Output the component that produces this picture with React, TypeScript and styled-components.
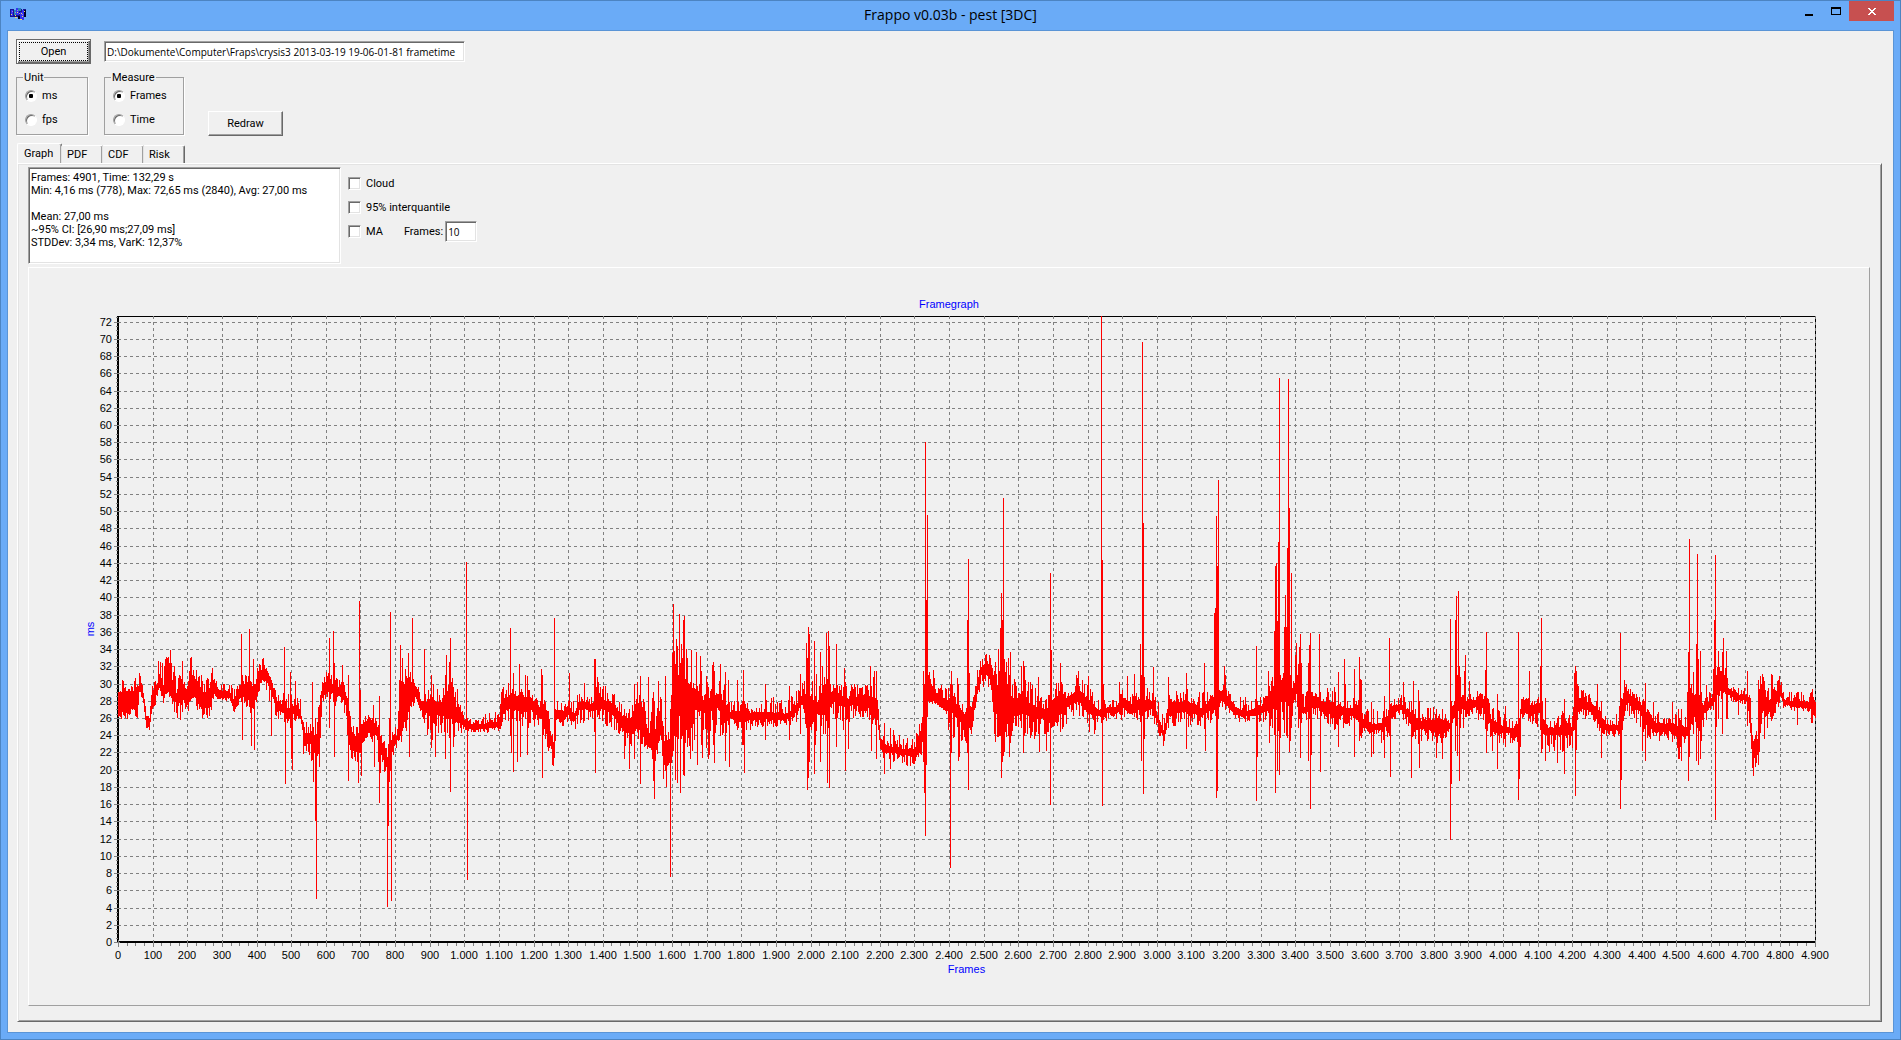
import React, { useLayoutEffect, useMemo, useRef, useState } from "react";
import styled, { createGlobalStyle } from "styled-components";

const face = "#f0f0f0";
const shade = "#a0a0a0";
const dark = "#696969";
const light = "#e3e3e3";

const GlobalStyle = createGlobalStyle`
  * { box-sizing: border-box; }
  body { margin: 0; background: #6aabf7; }
  button, input, textarea { font: inherit; color: inherit; }
`;

const Window = styled.div`
  min-height: 100vh;
  display: flex;
  flex-direction: column;
  padding: 0 6px 6px;
  border: 1px solid #4c84c2;
  background: #6aabf7;
  color: #000;
  font: 11px/13px Roboto, "Liberation Sans", sans-serif;
`;

const TitleBar = styled.header`
  display: grid;
  grid-template-columns: 1fr auto 1fr;
  height: 29px;
  flex: none;
`;

const AppIcon = styled.svg`
  margin: 7px 0 0 3px;
`;

const Title = styled.h1`
  margin: 0;
  font: 400 14px/28px "Open Sans", "Segoe UI", sans-serif;
`;

const WindowButtons = styled.div`
  display: flex;
  justify-content: flex-end;
`;

const WindowButton = styled.button<{ $close?: boolean }>`
  width: ${(p) => (p.$close ? 45 : 27)}px;
  height: 20px;
  padding: 0;
  border: 0;
  display: grid;
  place-items: center;
  background: ${(p) => (p.$close ? "#c75050" : "transparent")};
`;

const Client = styled.main`
  flex: 1;
  display: flex;
  flex-direction: column;
  padding: 8px 11px 10px 8px;
  border: 1px solid #5a94d6;
  background: ${face};
`;

const FileRow = styled.div`
  display: flex;
  align-items: center;
  gap: 13px;
  height: 25px;
`;

const PushButton = styled.button<{ $default?: boolean }>`
  width: 75px;
  height: 25px;
  padding: ${(p) => (p.$default ? 2 : 3)}px;
  border: 1px solid;
  border-color: ${(p) => (p.$default ? dark : `#fff ${dark} ${dark} #fff`)};
  background: ${face};
  box-shadow: ${(p) =>
    p.$default
      ? `inset 1px 1px 0 #fff, inset -1px -1px 0 ${dark}, inset -2px -2px 0 ${shade}`
      : `inset -1px -1px 0 ${shade}`};
`;

const FocusMark = styled.span`
  display: block;
  line-height: 17px;
  border: 1px dotted #000;
`;

const Field = styled.input<{ $width: number }>`
  width: ${(p) => p.$width}px;
  height: 21px;
  padding: 0 2px;
  border: 1px solid;
  border-color: ${shade} #fff #fff ${shade};
  border-radius: 0;
  background: #fff;
  box-shadow: inset 1px 1px 0 ${dark}, inset -1px -1px 0 ${light};
  font: 10px/13px "Open Sans", "Liberation Sans", sans-serif;
  outline: 0;
`;

const OptionsRow = styled.div`
  display: flex;
  align-items: flex-end;
  margin-top: 8px;
`;

const Group = styled.fieldset<{ $width: number; $gap: number }>`
  width: ${(p) => p.$width}px;
  height: 63px;
  min-width: 0;
  margin: 0 ${(p) => p.$gap}px 1px 0;
  padding: 6px 8px 0;
  border: 1px solid ${shade};
  box-shadow: 1px 1px 0 #fff;
`;

const Legend = styled.legend`
  margin-left: -2px;
  padding: 0 1px;
  line-height: 11px;
  background: ${face};
`;

const Option = styled.label`
  display: flex;
  align-items: center;
  gap: 5px;
  height: 13px;
  margin-bottom: 11px;
`;

const Radio = styled.input`
  appearance: none;
  width: 12px;
  height: 12px;
  margin: 0;
  border: 1px solid;
  border-color: ${shade} #fff #fff ${shade};
  border-radius: 50%;
  background: ${(p) =>
    p.checked ? "radial-gradient(circle, #000 0 2px, #fff 2.5px)" : "#fff"};
  box-shadow: inset 1px 1px 0 ${dark};
`;

const Check = styled.input`
  appearance: none;
  width: 13px;
  height: 13px;
  margin: 0;
  border: 1px solid;
  border-color: ${shade} #fff #fff ${shade};
  background: #fff;
  box-shadow: inset 1px 1px 0 ${dark}, inset -1px -1px 0 ${light};
  &:checked { background: radial-gradient(circle, #000 0 3px, #fff 3px); }
`;

const Tabs = styled.div`
  display: flex;
  align-items: flex-end;
  height: 20px;
  margin: 7px 0 0 1px;
`;

const Tab = styled.button<{ $active: boolean }>`
  width: ${(p) => (p.$active ? 45 : 42)}px;
  height: ${(p) => (p.$active ? 20 : 18)}px;
  margin-left: ${(p) => (p.$active ? 0 : -1)}px;
  padding: 0 0 0 ${(p) => (p.$active ? 6 : 5)}px;
  border: 1px solid;
  border-color: #fff ${dark} transparent ${(p) => (p.$active ? "#fff" : light)};
  border-bottom: 0;
  border-radius: 2px 2px 0 0;
  background: ${face};
  box-shadow: inset -1px 0 0 ${shade};
  text-align: left;
`;

const Page = styled.section`
  flex: 1;
  display: flex;
  flex-direction: column;
  margin-left: 1px;
  padding: 3px 11px 15px 10px;
  border: 1px solid;
  border-color: #fff ${dark} ${dark} #fff;
  box-shadow: inset 1px 1px 0 ${light}, inset -1px -1px 0 ${shade};
`;

const Summary = styled.div`
  display: flex;
  gap: 7px;
`;

const Report = styled.textarea`
  display: block;
  width: 313px;
  height: 97px;
  padding: 3px 2px;
  border: 1px solid;
  border-color: ${shade} #fff #fff ${shade};
  background: #fff;
  box-shadow: inset 1px 1px 0 ${dark}, inset -1px -1px 0 ${light};
  resize: none;
  outline: 0;
  overflow: hidden;
`;

const Overlays = styled.div`
  display: flex;
  flex-direction: column;
  padding-top: 10px;
`;

const AverageRow = styled.div`
  display: flex;
  align-items: flex-start;
`;

const FramesLabel = styled.label`
  display: flex;
  align-items: center;
  gap: 2px;
  margin: -4px 0 0 21px;
`;

const ChartPanel = styled.div`
  flex: 1;
  min-height: 300px;
  display: grid;
  margin-top: 3px;
  border: 1px solid;
  border-color: #fff ${shade} ${shade} #fff;
`;

const ChartSvg = styled.svg`
  display: block;
  width: 100%;
  height: 100%;
  min-width: 0;
  shape-rendering: crispEdges;
  font: 11px "Liberation Sans", Arial, sans-serif;
`;

const REPORT = `Frames: 4901, Time: 132,29 s
Min: 4,16 ms (778), Max: 72,65 ms (2840), Avg: 27,00 ms

Mean: 27,00 ms
~95% CI: [26,90 ms;27,09 ms]
STDDev: 3,34 ms, VarK: 12,37%`;

/* Frame, usual low, usual high, and the low and high of the scatter (ms). */
const BANDS: number[] = [
  0,26.2,29.4,26,30.8, 40,27,29.4,25.8,31, 55,26.5,29.5,26,31, 62,29.5,31,29.4,32.5, 72,28,29,27.5,29.5,
  80,25.2,26.5,24.5,27, 90,25,26,23.4,26.5, 98,27,29,26,30, 112,29,30,28.5,32, 120,29.5,31.5,29.4,34,
  130,28.5,30,27.5,33, 140,29,33,29,33.5, 150,29,31,28,34, 160,28,30,27,34, 170,27.5,28.5,25,30,
  180,27.5,31,25,33, 188,28,30,27.5,34, 195,27,29,26.5,30, 210,28,32,27,34.2, 220,28.5,30,27,32,
  240,27,29.5,25.8,31, 255,27,29,26,31, 265,27,30,26,32, 275,29,30.5,28.5,33, 290,28.3,29.3,28.3,30,
  320,28.4,29.2,28,30, 335,26.8,28,26.5,29.5, 345,28,29.5,27.5,30, 360,28.5,30,28,31, 375,28,30.5,27,31.5,
  390,27,29,26,30, 402,29,31.5,28.5,32.5, 415,30.5,31.5,30,33.2, 432,30,31.5,29,32.5, 445,28.5,30,26,30,
  460,27,28,26,29, 490,26.2,27.2,25.5,29, 510,26.5,27.5,25,29, 525,26,27,26,28.5, 540,23,24.5,22,27,
  560,23,24,21,25, 570,21,24,19,26, 580,22,26,20,28, 590,29,30,28,31, 605,29,30.5,28,31.5,
  640,28.5,29.5,27,30.5, 655,28,29,26,30, 662,24.5,28,23.5,28.5, 675,22,24.5,21,25.5, 690,22,24,21,25,
  705,23,25.5,21,26, 720,24.3,26,24,26.5, 745,24,25.5,22,26, 755,22,24.5,19,25, 765,21,23,20,24,
  778,20,21,18,22, 790,22,24,21,25, 805,23.5,24,22.5,25, 812,24,29,22,31, 830,26,31,24,32,
  850,28,30.5,27,31, 862,28.5,29.5,28,30, 875,27,28,26.5,29, 890,26.5,28,24,29, 910,26.2,28,23,30,
  940,26.3,28,24,29.5, 955,26,30,23,32, 970,25.5,28,23,30, 985,25.3,27,24,29, 1000,25,25.8,24.5,26,
  1025,24.6,25.2,24.4,26, 1050,24.8,25.4,24.4,26.5, 1100,25,25.6,24.4,26.8, 1105,25.5,28,25,29,
  1115,27,28.5,26,31, 1140,27,28.8,24,30, 1165,26.5,28.8,23.5,29.5, 1190,27,28.5,25,29.8,
  1215,26,27.5,25,28.5, 1235,25.5,27,23,28.5, 1250,22.5,24,21,26, 1256,20.5,23,20.3,24, 1265,26,27,25,28,
  1285,25.7,27,25,29, 1300,26.3,27.5,25.5,29.8, 1315,25.5,26.5,24,28, 1330,27,28,25.5,29, 1350,27,28,25.5,29,
  1370,26.8,27.5,26,28.3, 1380,26.7,30,26,31, 1400,27,28.2,25,30, 1430,26.2,27.8,24,29,
  1460,24.5,26,22.5,27.5, 1480,24,26,21.5,27, 1495,24.5,28,23,29, 1510,24,28,23,30, 1530,22.8,24.5,22,29,
  1550,21.8,24,20,28, 1565,24,28,23,29.5, 1577,21.5,23.5,19,27, 1592,21,24,19.5,26, 1600,22,29,21,31,
  1608,26,31,24,33, 1640,26,31,23,32, 1655,27,29.5,22,31, 1690,26.5,28,24,30, 1730,27,29,24,31,
  1750,26.2,28,24,30, 1770,26,26.7,25,28, 1800,25.5,27,23.5,28.5, 1830,25.8,26.7,25,28,
  1870,25.8,26.8,25,28.5, 1930,25.8,26.6,25,28.5, 1955,26.5,27.5,25.5,29, 1980,27.8,29,27,30.5,
  1995,24,29,21,31, 2015,26.3,28,23,30, 2040,26.5,29,24,31, 2070,28,29.5,26,31, 2080,27.5,29,26,30,
  2095,27.3,28.3,24.5,30.5, 2120,27.5,28.5,26,30, 2160,27.5,28.7,26,30, 2185,26.5,28.5,25,31,
  2192,26,28,25,29, 2200,22.5,24,22,25, 2210,22,23,21,24.5, 2235,22,22.7,21,24.3, 2270,21.7,22.5,20.5,23.8,
  2300,21.5,22.5,20.3,23.8, 2315,22.5,24.5,21.5,25.5, 2325,23,27,20.5,29, 2340,28,31,28,31.5,
  2360,27.7,29,27,30.5, 2385,27,28.3,26,30, 2410,26.5,28.3,23,30, 2430,25.5,27.5,23,28.5,
  2445,24.5,26.5,23,28, 2463,25,26.5,23.8,27.5, 2475,27.5,29.5,27,31, 2490,31,32,29,33,
  2505,31,32.3,29,34, 2520,30.5,32.5,29,33, 2530,27,30,24,31, 2560,26,31,22.5,32, 2580,26,28,24,30.5,
  2610,26.5,29,24,31, 2640,26,27.5,23.5,30, 2680,25.8,27.2,24,28.5, 2700,26,28.5,25,30,
  2720,26.5,29,24,30.5, 2745,27.5,28.3,26,29, 2770,28,29.5,26.5,31, 2800,26.5,28.3,24,30,
  2830,26.2,27,24.5,29.5, 2860,26.7,27.3,26,28.5, 2880,26.5,27.3,26,28, 2900,27.2,28.5,25.5,30,
  2925,26.5,27.8,25.5,29, 2955,27,28.5,25.5,30, 2985,27,28,26,29.5, 3000,25.5,26.5,24.5,29,
  3020,23.5,24.5,22.5,26, 3035,26.5,28,25,29, 3060,26.5,28,25,29.5, 3090,26.8,28,25,29.5,
  3130,26.2,27.2,25,29, 3160,27,28.5,25.5,29.5, 3190,28,29.5,26.5,30.5, 3220,26.5,27.5,25.5,28.5,
  3250,26.2,26.8,25.5,28.5, 3290,26.3,27.3,24.5,28.3, 3320,27,28,26,29.5, 3330,27,29,24,30.5,
  3345,26.8,31,24,32, 3358,28,30.3,27.5,30.5, 3370,28,31,24,32, 3385,27,29.5,24,30, 3405,29,30,26,31,
  3415,26,30,24,31, 3425,26.7,27.3,26.5,28, 3435,27,29,25,30, 3460,27.5,28.5,25,29.5, 3480,26.5,28,25,30,
  3500,26.5,28,25,30, 3520,26.3,27.5,24,29.5, 3560,26.3,27.2,25,28.5, 3585,25.5,28,23.5,30,
  3595,24.8,26,24.5,27, 3620,24.6,25.4,24,27.5, 3650,24.6,25.4,23,27, 3665,25,26.5,23,27.5,
  3680,26.5,27.5,25.5,29, 3705,27,27.7,25.5,29, 3725,26,27,24,28.5, 3740,24.5,26.5,23,28,
  3760,24.8,25.7,23,27, 3785,24.5,26,23,27.5, 3820,24,26,23,27, 3845,24.8,25.5,24.5,26.5, 3855,26,27,25.8,28,
  3872,27,29,24,31, 3890,27,28,25,30, 3905,27.3,28.3,26.5,29, 3940,27.2,28.2,25.5,29.2,
  3955,26,28.5,23.5,29.5, 3965,24.5,26,22.5,27.5, 3990,24.3,25.2,23,27, 4035,24.3,24.8,23,26,
  4045,22.5,24.5,22,25, 4052,26.5,28.5,26,29, 4080,26.5,27.5,25,29, 4105,26.5,28,25,28.7,
  4115,24,26,22.5,27.5, 4130,24,25,22,26, 4160,24,25,22,27.3, 4200,24,25,22.5,26.5, 4210,26,29,25,31,
  4220,27,28.5,26.5,29.5, 4235,27,28,26,29.5, 4265,26.5,27.5,25.5,28.2, 4280,24.7,26.5,24,28,
  4288,24.6,25.3,23.9,26.5, 4330,24.6,25.3,23.9,26.5, 4342,24.6,28,24,29, 4355,28,29.5,27,30,
  4370,27.3,28.5,25.5,29.5, 4390,27,28,25.5,28.7, 4402,26,27.5,24.5,28.5, 4418,25,26.5,23.5,27,
  4440,24.3,25.5,23.2,26.7, 4480,24.5,25.5,23.5,26.5, 4505,23.7,25.3,22,27, 4530,24,25,23.5,26,
  4540,26,28.5,24,31, 4560,26,29,24,30, 4580,26.5,27.5,25,29, 4605,27.5,28.5,27,29, 4615,29,31,28,32,
  4640,29,30.5,28,32, 4650,28.7,29.5,28,30, 4680,28.2,28.8,27.8,29.5, 4705,28,28.8,27.7,29.5,
  4713,25,28,24.5,29, 4720,21,23,20,25, 4730,21.5,23,20.5,24.5, 4735,22,24,21,26, 4740,23,29,22,30,
  4748,27.5,30.5,26.5,31, 4765,26.5,27.7,25.5,29.5, 4780,27,29,26,30.5, 4800,28.5,30,28,30.8,
  4810,27.6,28.2,27,29, 4840,27.3,28,26.7,29.2, 4870,27.2,28,27,29, 4901,27,28,26,29.5,
];

/* Frame, lowest and highest value of the single outliers (ms). */
const SPIKES: number[] = [
  356,28,35.8, 359,23.6,31, 379,28,36.3, 383,22.9,30, 394,22.4,30, 391,28,32.9, 443,24,30, 480,26,34.2,
  483,18.4,28, 498,25,31.3, 500,21.4,27, 503,20.1,27, 512,26,30.3, 535,21.9,25, 561,23,30.2, 564,18.7,25,
  570,14.2,26, 573,5.15,23, 610,25,35.3, 622,28,36.1, 625,21.6,32.4, 648,28,32.1, 665,18.8,31,
  694,18.6,24, 697,22,39.6, 700,22,29.2, 703,19.4,25, 737,24,27.5, 740,20.4,25, 754,16.2,28.6,
  778,4.16,21, 781,13.6,23, 783,18.7,26, 786,22,38.3, 789,4.9,23, 815,24,34.5, 821,25,33, 838,28,33.5,
  841,21.6,29, 850,28,37.6, 884,26,34, 905,22.6,31, 916,21.6,28, 945,21.4,31, 948,26,33.3, 957,26,32.5,
  960,17.5,35.3, 968,22.8,28, 1006,25,44.1, 1009,7.3,26, 1133,24,36.4, 1136,22,28, 1141,19.9,31.2,
  1153,21,28, 1159,27,32.3, 1162,21.6,28, 1176,26,31, 1182,21.8,30.9, 1222,26,31.7, 1225,19.2,31,
  1260,21.5,37.6, 1263,23.5,27, 1303,26,31.2, 1346,27,30.1, 1375,24.5,32.9, 1378,19.7,32.8, 1462,21.4,27,
  1476,20.2,26, 1491,21.3,30, 1499,26,30.2, 1508,18.5,30.9, 1531,23,30.7, 1549,16.7,28, 1546,18.8,29,
  1560,24,30.3, 1575,19,24, 1580,20,30.9, 1583,18.1,24, 1595,7.7,27, 1601,26,33.5, 1603,26,39.2,
  1606,24,33.8, 1609,18.9,31, 1612,26,35.2, 1615,18.6,34.4, 1621,27,38.1, 1624,17.4,30, 1627,29,34.6,
  1630,24,33, 1632,19.5,37.4, 1635,19.4,37.8, 1641,29,34, 1644,22.8,33, 1653,21.4,30, 1655,27,33.9,
  1670,27,33.6, 1673,20.6,27, 1681,27,33.2, 1684,23,31.4, 1687,21.5,28, 1699,22.6,30.9, 1703,21.4,28,
  1708,21.8,27, 1716,26,32.1, 1719,23,32.5, 1722,20.9,31.5, 1739,24,32.3, 1754,21.1,31.3, 1762,26,30.4,
  1765,20.4,27, 1788,25,30.4, 1803,23,28, 1806,23,31.6, 1808,19.7,28, 1869,23.6,29.9, 1939,23.6,29.7,
  1970,24.3,31.1, 1987,25,34.7, 1990,17.7,33, 1993,19.2,36.5, 1996,21,35.8, 2010,19.6,34.9, 2013,23,28,
  2016,26,31.1, 2028,21,33.6, 2032,27,32, 2045,27,35.9, 2048,18.6,28, 2051,28,36.1, 2054,18,34.4,
  2074,22.8,34.6, 2097,28,31.8, 2100,20,28, 2109,22.5,28, 2172,28,32, 2175,22.3,28, 2184,28,31.4,
  2190,21.4,31.5, 2213,19.6,25.4, 2230,20.2,24.8, 2238,22,24.6, 2325,21,31.5, 2328,17.4,30,
  2331,12.4,58, 2334,20.6,39.7, 2337,27,49.6, 2354,29,31.6, 2403,8.7,30, 2406,22.1,31.4, 2423,26,30.6,
  2426,21.1,30, 2429,21.6,27, 2452,22,37.4, 2455,17.8,44.5, 2458,25,31.2, 2529,24.2,31.5, 2534,23.3,32.5,
  2541,26,34, 2544,24,31.5, 2547,24,36.4, 2550,19.2,40.5, 2553,21,37.4, 2556,21.7,51.5, 2559,22.2,32.8,
  2565,25,32.5, 2571,24,33, 2573,21.6,31, 2576,23.2,33.7, 2608,25,32, 2614,22,32.6, 2617,24,32,
  2634,23.8,28, 2657,27,30.8, 2660,22.2,28, 2681,22.3,27, 2692,16,42.8, 2694,25,33.9, 2721,24.5,32.4,
  2768,27,31, 2773,28,31.4, 2802,27,30.9, 2819,24.2,28, 2839,27,72.65, 2842,15.9,44.3, 2845,27,30,
  2892,27,30.2, 2914,27,30.9, 2934,27,31.1, 2952,27,34.6, 2955,21.1,31, 2957,27,69.6, 2960,17.3,48.6,
  2963,23.7,30.7, 2989,27,31.9, 3033,27,30.7, 3085,22.5,31.2, 3137,24.8,32.4, 3140,22.3,28,
  3165,27,38.2, 3168,27,38.8, 3171,16.8,49.4, 3174,17.6,43.6, 3177,26,53.6, 3194,28,32, 3197,27,31,
  3287,16.5,34.3, 3290,21.6,28, 3321,27,31.4, 3324,23.2,28, 3333,25,30.8, 3339,26,36.1, 3341,17.4,43.6,
  3344,27,44, 3347,20,37.3, 3350,24.6,46.4, 3353,19.5,65.5, 3356,23.8,31, 3365,28,31.2, 3368,24.4,36.5,
  3370,28,40.3, 3373,24,36.5, 3376,23.8,45.7, 3379,29,65.3, 3382,22.2,50.4, 3385,23.5,31, 3388,25,42.8,
  3399,28,33.3, 3402,29,34.7, 3408,25,32.3, 3411,26,34.2, 3414,21.5,35.8, 3417,26,32.4, 3437,21.1,32.4,
  3440,26,34.5, 3443,15.5,35.9, 3446,21.8,29, 3469,27,35.8, 3471,19.8,29, 3523,22.7,31.3, 3541,26,32.8,
  3544,26,30, 3570,21.6,31.7, 3584,23.5,33.1, 3587,24,30.5, 3590,23.8,30.4, 3619,21.6,27.8, 3624,21.9,27,
  3656,21.5,28.6, 3671,24,35.3, 3673,19.3,27, 3711,26,30.2, 3734,19.2,28, 3740,24,30.3, 3754,25,29.3,
  3757,20.3,28, 3807,21.5,27, 3824,21.4,27, 3847,11.9,37.5, 3850,18.4,28, 3861,22.3,37.4, 3864,27,40.2,
  3867,21.7,31, 3870,27,40.7, 3873,18.8,32, 3876,25,30.8, 3887,27,31.5, 3890,27,33.3, 3902,27,30.3,
  3948,26,31.6, 3951,22.1,36, 3969,22.3,27, 3982,20.2,28.8, 4005,22.7,27.4, 4043,16.6,36, 4046,19,26,
  4049,22.8,27, 4075,27,31.5, 4106,26,32, 4109,22,37.6, 4112,22.5,28, 4121,21.1,28.3, 4156,20.9,26,
  4176,19.6,28.2, 4204,26,31.2, 4207,17.1,32, 4210,22.4,31.5, 4212,27,31.1, 4271,25,30, 4283,21.5,28,
  4339,15.6,35.9, 4342,18.9,28, 4350,27,30.4, 4402,22.3,28, 4411,21.1,30.1, 4434,24,27.8, 4489,24,27.8,
  4506,21.4,27, 4509,21.3,26, 4515,21.1,27, 4532,24,29, 4535,18.8,33.7, 4538,21.6,46.8, 4549,26,31.3,
  4558,21.1,34.6, 4561,25,45, 4564,20.7,32.8, 4570,21.4,33.8, 4573,23.5,29, 4587,27,29.8, 4607,27,31.7,
  4610,28,37.4, 4613,14.3,44.9, 4616,25.1,31, 4622,26,33.8, 4633,24.3,33.6, 4636,29,35.3, 4642,29,31.8,
  4645,26,33.8, 4648,26,30, 4679,26.5,29, 4705,25.2,31.5, 4720,20.3,23, 4723,19.4,22.5, 4728,20.4,24,
  4737,20.6,30.4, 4743,26,30.9, 4748,27,31.1, 4751,28,30.8, 4754,23.7,29, 4762,24.9,28, 4775,25.8,31.1,
  4777,26,31, 4798,28,30.9, 4850,25.3,29, 4890,25.5,29, 4893,25.5,29,
];

const FRAME_COUNT = 4901;
const MAX_MS = 72.65;
const MARGIN = { left: 90, right: 53, top: 48, bottom: 63 };

/* Fixed-seed generator, so that the trace is the same on every draw. */
function seeded(seed: number) {
  let s = seed;
  return () => {
    s = (s * 1664525 + 1013904223) % 4294967296;
    return s / 4294967296;
  };
}

function buildTrace(width: number, toY: (ms: number) => number) {
  const random = seeded(4901);
  const columns: [number, number][] = [];
  let b = 0;
  for (let c = 0; c <= width; c++) {
    const frame = (c / width) * FRAME_COUNT;
    while (b + 10 < BANDS.length && BANDS[b + 5] <= frame) b += 5;
    const t = Math.min(1, (frame - BANDS[b]) / (BANDS[b + 5] - BANDS[b]));
    const at = (k: number) => BANDS[b + k] + (BANDS[b + 5 + k] - BANDS[b + k]) * t;
    const low = at(1), high = at(2), minimum = at(3), maximum = at(4);
    let lo = low + random() * (high - low) * 0.15;
    let hi = high - random() * (high - low) * 0.15;
    if (random() < 0.62) lo = low - Math.max(0, low - minimum) * random();
    if (random() < 0.62) hi = high + Math.max(0, maximum - high) * random();
    columns.push([lo, hi]);
  }
  for (let i = 0; i < SPIKES.length; i += 3) {
    const column = columns[Math.round((SPIKES[i] / FRAME_COUNT) * width)];
    if (column) {
      column[0] = Math.min(column[0], SPIKES[i + 1]);
      column[1] = Math.max(column[1], SPIKES[i + 2]);
    }
  }
  return columns
    .map(([lo, hi], c) => `M${c + 0.5} ${Math.round(toY(hi))}V${Math.round(toY(lo)) + 1}`)
    .join("");
}

function FrameGraph() {
  const ref = useRef<SVGSVGElement>(null);
  const [size, setSize] = useState({ width: 0, height: 0 });

  useLayoutEffect(() => {
    const node = ref.current;
    if (!node) return;
    const measure = () => {
      const box = node.getBoundingClientRect();
      setSize({ width: Math.round(box.width), height: Math.round(box.height) });
    };
    measure();
    const observer = new ResizeObserver(measure);
    observer.observe(node);
    return () => observer.disconnect();
  }, []);

  const plotWidth = Math.max(10, size.width - MARGIN.left - MARGIN.right);
  const plotHeight = Math.max(10, size.height - MARGIN.top - MARGIN.bottom);
  const toX = (frame: number) => Math.round((frame / FRAME_COUNT) * plotWidth);
  const toY = (ms: number) => plotHeight - (ms / MAX_MS) * plotHeight;
  const trace = useMemo(() => buildTrace(plotWidth, toY), [plotWidth, plotHeight]);

  const frames = Array.from({ length: 50 }, (_, i) => i * 100);
  const times = Array.from({ length: 37 }, (_, i) => i * 2);
  const minorX = Array.from({ length: 197 }, (_, i) => `M${toX(i * 25) + 0.5} ${plotHeight + 1}v3`);
  const minorY = Array.from({ length: 146 }, (_, i) => `M-2 ${Math.round(toY(i / 2)) + 0.5}h2`);
  const gridX = frames.map((f) => `M${toX(f) + 0.5} 0V${plotHeight}`).slice(1);
  const gridY = times.map((t) => `M0 ${Math.round(toY(t)) + 0.5}H${plotWidth}`).slice(1);
  const majorX = frames.map((f) => `M${toX(f) + 0.5} ${plotHeight - 2}v7`);
  const majorY = times.map((t) => `M-4 ${Math.round(toY(t)) + 0.5}h6`);

  return (
    <ChartSvg ref={ref} role="img" aria-label="Framegraph">
      <g transform={`translate(${MARGIN.left - 1} ${MARGIN.top})`}>
        <path d={`M0 0.5H${plotWidth + 1}`} stroke="#000" />
        <path d={`M${plotWidth + 0.5} 0V${plotHeight}`} stroke="#000" />
        <path d={`M0 0V${plotHeight}H${plotWidth + 1}`} fill="none" stroke="#000" strokeWidth="2" />
        <path d={gridX.join("")} stroke="#808080" strokeDasharray="3 3" />
        <path d={gridY.join("")} stroke="#808080" strokeDasharray="3 3" />
        <path d={minorX.join("") + minorY.join("") + majorX.join("") + majorY.join("")} stroke="#808080" />
        <path d={trace} stroke="#f00" />
        {times.map((t) => (
          <text key={t} x={-6} y={Math.round(toY(t)) + 4} textAnchor="end">{t}</text>
        ))}
        {frames.map((f) => (
          <text key={f} x={toX(f)} y={plotHeight + 17} textAnchor="middle">
            {f < 1000 ? f : (f / 1000).toFixed(3)}
          </text>
        ))}
        <g fill="#00f" textAnchor="middle">
          <text x={size.width / 2 - MARGIN.left + 1} y={-8}>Framegraph</text>
          <text x={plotWidth / 2} y={plotHeight + 31}>Frames</text>
          <text transform={`translate(-24 ${plotHeight / 2}) rotate(-90)`}>ms</text>
        </g>
      </g>
    </ChartSvg>
  );
}

const TABS = ["Graph", "PDF", "CDF", "Risk"];

export default function App() {
  const [unit, setUnit] = useState("ms");
  const [measure, setMeasure] = useState("Frames");
  const [tab, setTab] = useState("Graph");

  return (
    <Window>
      <GlobalStyle />
      <TitleBar>
        <AppIcon width="16" height="13" viewBox="0 0 16 13" shapeRendering="crispEdges" aria-hidden="true">
          <path fill="#1a1490" d="M0 1h4v8H0zM4 3h4v6H4zM8 1h4v9H8zM13 1h3v7h-3z" />
          <path fill="#3434f0" d="M1 2h2v6H1zM6 0h3v7H6zM10 4h4v8h-4zM12 2h2v3h-2z" />
          <path fill="#2888b8" d="M4 2h2v5H4zM8 0h3v3H8z" />
          <path fill="#000030" d="M14 2h2v7h-2zM8 8h2v3H8z" />
          <path fill="#f4e060" d="M1 6h1v1H1zM5 7h1v1H5zM7 4h1v1H7zM11 5h1v1h-1zM10 11h2v1h-2zM14 3h1v1h-1zM12 8h1v1h-1zM5 9h2v1H5z" />
          <path fill="#a080f0" d="M2 3h1v1H2zM5 4h1v1H5zM9 5h1v1H9zM12 6h1v1h-1zM7 2h1v1H7z" />
        </AppIcon>
        <Title>Frappo v0.03b - pest [3DC]</Title>
        <WindowButtons>
          <WindowButton aria-label="Minimize">
            <svg width="10" height="10" shapeRendering="crispEdges"><path d="M1 8h8v2H1z" /></svg>
          </WindowButton>
          <WindowButton aria-label="Maximize">
            <svg width="10" height="8" shapeRendering="crispEdges"><path fillRule="evenodd" d="M0 0h10v8H0zM1 2v5h8V2z" /></svg>
          </WindowButton>
          <WindowButton $close aria-label="Close">
            <svg width="8" height="7" shapeRendering="crispEdges">
              <path fill="#fff" d="M0 0h2v1h1v1h2V1h1V0h2v1H7v1H6v1H5v1h1v1h1v1h1v1H6V6H5V5H3v1H2v1H0V6h1V5h1V4h1V3H2V2H1V1H0z" />
            </svg>
          </WindowButton>
        </WindowButtons>
      </TitleBar>
      <Client>
        <FileRow>
          <PushButton $default><FocusMark>Open</FocusMark></PushButton>
          <Field
            $width={361}
            aria-label="Log file"
            defaultValue="D:\Dokumente\Computer\Fraps\crysis3 2013-03-19 19-06-01-81 frametime"
          />
        </FileRow>
        <OptionsRow>
          <Group $width={72} $gap={16}>
            <Legend>Unit</Legend>
            {["ms", "fps"].map((name) => (
              <Option key={name}>
                <Radio type="radio" name="unit" checked={unit === name} onChange={() => setUnit(name)} />
                {name}
              </Option>
            ))}
          </Group>
          <Group $width={80} $gap={24}>
            <Legend>Measure</Legend>
            {["Frames", "Time"].map((name) => (
              <Option key={name}>
                <Radio type="radio" name="measure" checked={measure === name} onChange={() => setMeasure(name)} />
                {name}
              </Option>
            ))}
          </Group>
          <PushButton>Redraw</PushButton>
        </OptionsRow>
        <Tabs role="tablist">
          {TABS.map((name) => (
            <Tab key={name} role="tab" aria-selected={tab === name} $active={tab === name} onClick={() => setTab(name)}>
              {name}
            </Tab>
          ))}
        </Tabs>
        <Page role="tabpanel">
          <Summary>
            <Report readOnly aria-label="Statistics" defaultValue={REPORT} />
            <Overlays>
              <Option><Check type="checkbox" />Cloud</Option>
              <Option><Check type="checkbox" />95% interquantile</Option>
              <AverageRow>
                <Option><Check type="checkbox" />MA</Option>
                <FramesLabel>
                  Frames:
                  <Field $width={32} defaultValue="10" />
                </FramesLabel>
              </AverageRow>
            </Overlays>
          </Summary>
          <ChartPanel>
            <FrameGraph />
          </ChartPanel>
        </Page>
      </Client>
    </Window>
  );
}
